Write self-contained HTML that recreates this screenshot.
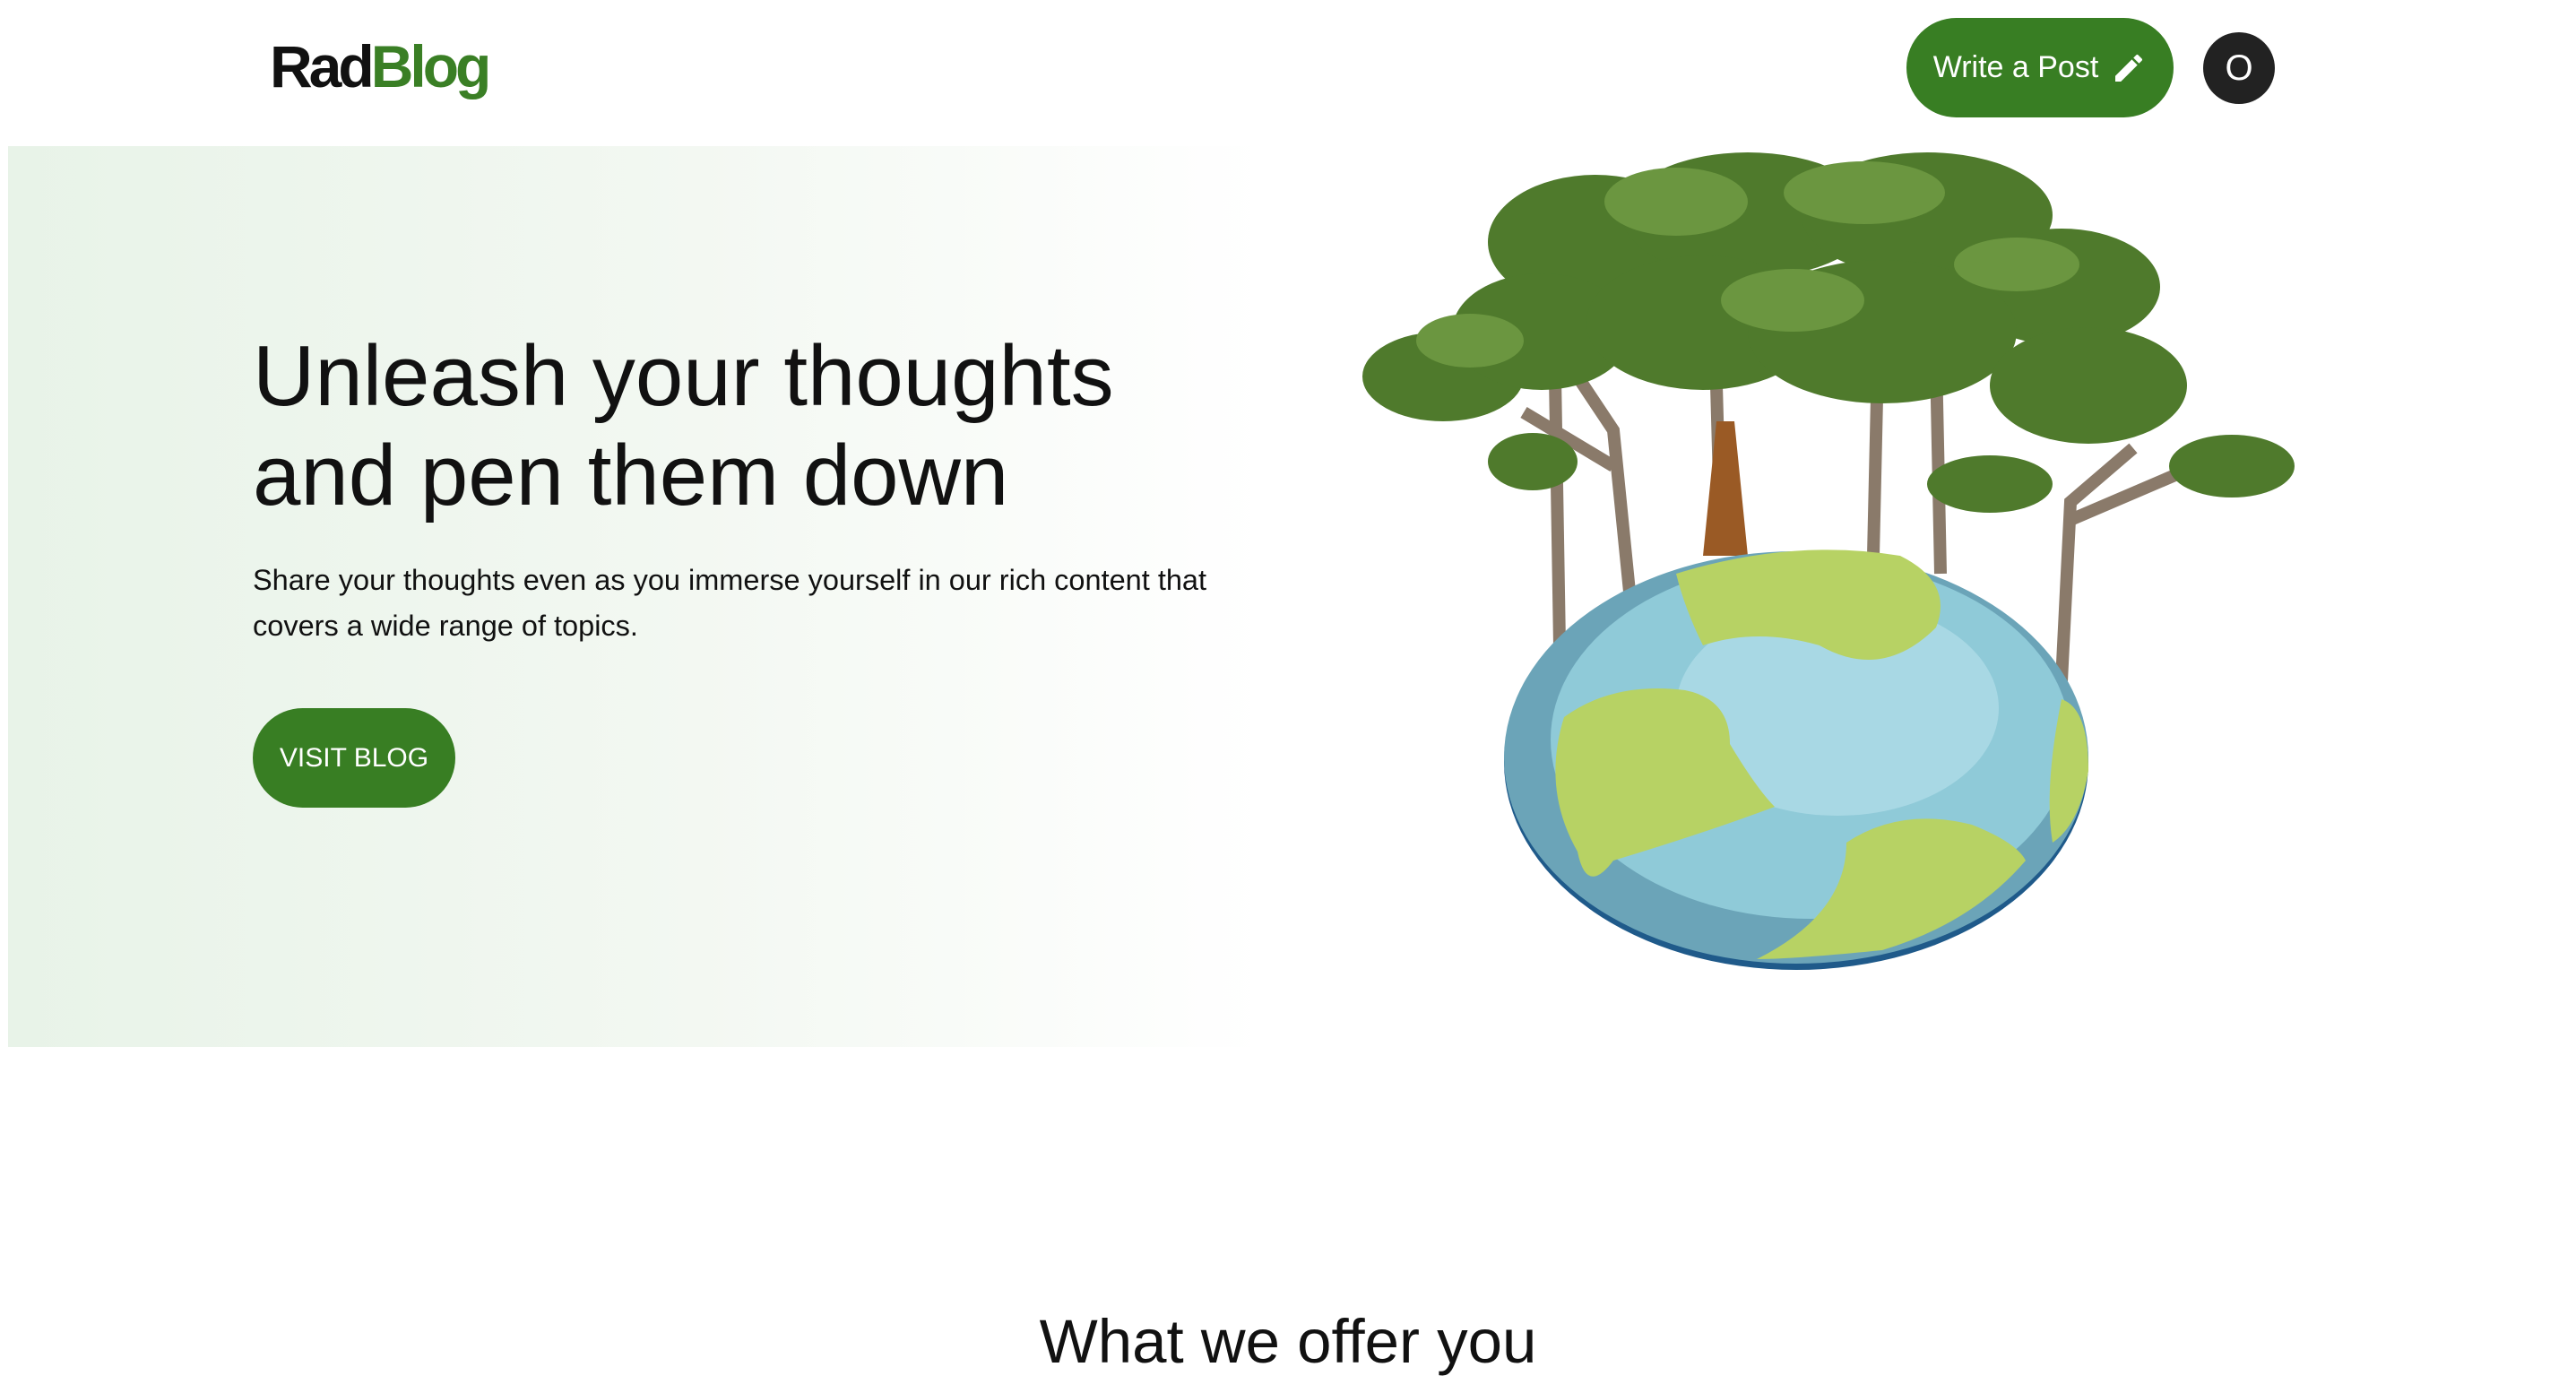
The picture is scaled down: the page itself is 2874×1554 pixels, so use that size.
<!DOCTYPE html>
<html><head><meta charset="utf-8"><style>
body{margin:0;width:2874px;height:1554px;overflow:hidden;background:#fff;font-family:"Liberation Sans",Arial,sans-serif;position:relative}
.abs{position:absolute}
.logo{left:301px;top:36px;font-size:66px;font-weight:bold;letter-spacing:-4px;color:#111}
.logo span{color:#3a7f25}
.wbtn{left:2127px;top:20px;width:298px;height:111px;border-radius:56px;background:#387e23;color:#fff;font-size:34px;display:flex;align-items:center;justify-content:center;gap:14px}
.av{left:2458px;top:36px;width:80px;height:80px;border-radius:50%;background:#222;color:#fff;font-size:40px;display:flex;align-items:center;justify-content:center}
.hero{left:9px;top:163px;width:1400px;height:1005px;background:linear-gradient(90deg,#e8f3e8 0%,#f3f8f2 55%,#ffffff 100%)}
h1{position:absolute;left:282px;top:364px;margin:0;font-weight:normal;font-size:96px;line-height:111px;color:#111}
p.s{position:absolute;left:282px;top:622px;margin:0;font-size:32.5px;line-height:51px;color:#111;width:1150px}
.vb{left:282px;top:790px;width:226px;height:111px;border-radius:56px;background:#387e23;color:#fff;font-size:30px;display:flex;align-items:center;justify-content:center}
.off{left:0;width:2874px;top:1457px;text-align:center;font-size:69px;color:#111}
</style></head><body>
<div class="abs logo">Rad<span>Blog</span></div>
<div class="abs wbtn">Write a Post <svg width="40" height="40" viewBox="0 0 24 24"><path fill="#fff" d="M3 17.25V21h3.75L17.810 9.94l-3.75-3.75L3 17.25zM20.71 7.04a1 1 0 0 0 0-1.41l-2.34-2.34a1 1 0 0 0-1.41 0l-1.830 1.83 3.75 3.75 1.83-1.83z"/></svg></div>
<div class="abs av">O</div>
<div class="abs hero"></div>
<h1>Unleash your thoughts<br>and pen them down</h1>
<p class="s">Share your thoughts even as you immerse yourself in our rich content that covers a wide range of topics.</p>
<div class="abs vb">VISIT BLOG</div>
<svg class="abs" style="left:1460px;top:170px" width="1120" height="920" viewBox="1460 170 1120 920">
<g stroke="#8a7a6a" stroke-width="14" fill="none">
<path d="M1740 720 L1735 420"/><path d="M1820 680 L1800 480 L1760 420"/><path d="M1920 610 L1915 430"/><path d="M2090 620 L2095 400"/><path d="M2165 640 L2160 400"/><path d="M2300 760 L2310 560 L2380 500"/><path d="M1800 520 L1700 460"/><path d="M2310 580 L2450 520"/>
</g>
<path d="M1900 620 L1915 470 L1935 470 L1950 620Z" fill="#9a5a25"/>
<g fill="#4f7a2c">
<ellipse cx="1780" cy="270" rx="120" ry="75"/><ellipse cx="1950" cy="240" rx="140" ry="70"/><ellipse cx="2150" cy="240" rx="140" ry="70"/><ellipse cx="2300" cy="320" rx="110" ry="65"/>
<ellipse cx="1610" cy="420" rx="90" ry="50"/><ellipse cx="1720" cy="370" rx="100" ry="65"/><ellipse cx="1900" cy="360" rx="130" ry="75"/><ellipse cx="2100" cy="370" rx="150" ry="80"/><ellipse cx="2330" cy="430" rx="110" ry="65"/><ellipse cx="2490" cy="520" rx="70" ry="35"/><ellipse cx="1710" cy="515" rx="50" ry="32"/><ellipse cx="2220" cy="540" rx="70" ry="32"/>
</g>
<g fill="#6b9640"><ellipse cx="1870" cy="225" rx="80" ry="38"/><ellipse cx="2080" cy="215" rx="90" ry="35"/><ellipse cx="1640" cy="380" rx="60" ry="30"/><ellipse cx="2000" cy="335" rx="80" ry="35"/><ellipse cx="2250" cy="295" rx="70" ry="30"/></g>
<ellipse cx="2004" cy="850" rx="326" ry="232" fill="#1f5a8a"/>
<ellipse cx="2004" cy="845" rx="326" ry="230" fill="#6ba4b8"/>
<ellipse cx="2020" cy="825" rx="290" ry="200" fill="#8fcad8"/>
<ellipse cx="2050" cy="790" rx="180" ry="120" fill="#a8d8e4"/>
<path d="M1870 640 Q2000 600 2120 620 Q2180 650 2160 700 Q2100 760 2030 720 Q1960 700 1900 720 Q1880 680 1870 640Z" fill="#b7d264"/>
<path d="M1745 800 Q1800 760 1880 770 Q1930 780 1930 830 Q1960 880 1980 900 Q1900 930 1800 960 Q1770 1000 1760 950 Q1720 880 1745 800Z" fill="#b7d264"/>
<path d="M2060 940 Q2120 900 2200 920 Q2250 940 2260 960 Q2200 1030 2100 1060 Q2000 1070 1960 1070 Q2060 1020 2060 940Z" fill="#b7d264"/>
<path d="M2300 780 Q2330 790 2330 860 Q2320 920 2290 940 Q2280 880 2300 780Z" fill="#b7d264"/>
</svg>
<div class="abs off">What we offer you</div>
</body></html>
